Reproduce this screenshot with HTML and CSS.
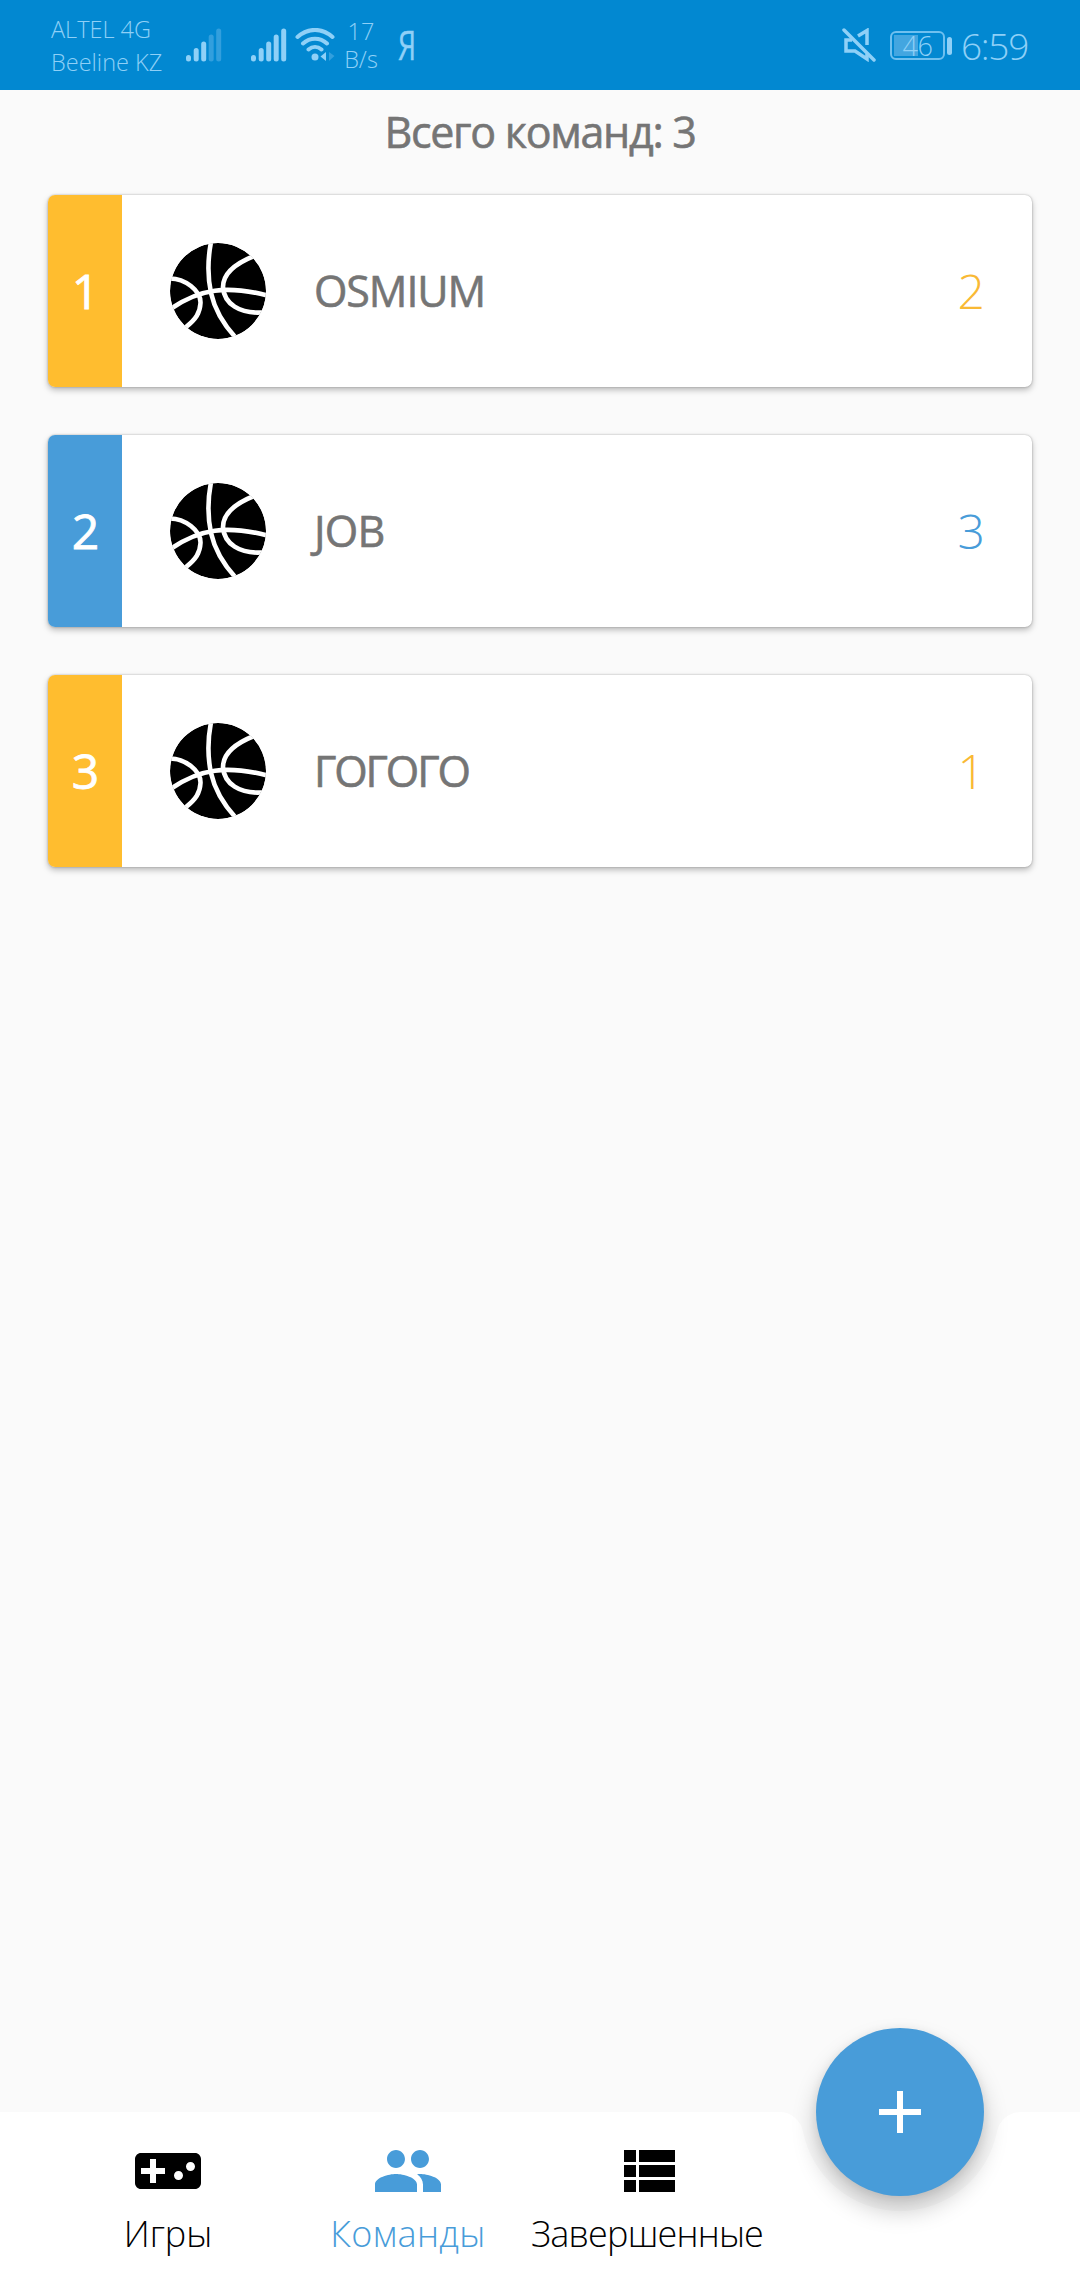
FILE: index.html
```html
<!DOCTYPE html>
<html lang="ru">
<head>
<meta charset="utf-8">
<title>Команды</title>
<link rel="stylesheet" href="styles.css">
</head>
<body>
<svg class="defs" width="0" height="0" aria-hidden="true">
  <symbol id="ball" viewBox="0 0 96 96">
    <clipPath id="ball-clip"><circle cx="48" cy="48" r="48"/></clipPath>
    <g clip-path="url(#ball-clip)">
      <circle cx="48" cy="48" r="48"/>
      <g fill="none" stroke="#fff" stroke-width="4.600">
        <path d="M41 -1C37 20 38 36 41 50C45 68 54 82 66 95"/>
        <path d="M2 65C30 46 56 42 98 52.500"/>
        <path d="M-1 35.500C15 35 31 48 30.500 60C30 70 26 76 16 84"/>
        <path d="M84 13C64 21 53 32 53 44C54 61 70 71 92 69.500"/>
      </g>
    </g>
  </symbol>
</svg>
<div class="screen">
  <header class="status">
    <div class="carriers"><span class="altel">ALTEL 4G</span><span class="beeline">Beeline KZ</span></div>
    <svg class="signal first" viewBox="0 0 36 34" width="36" height="34" stroke="#8fd0f7" stroke-width="5" stroke-linecap="round">
      <path d="M2.500 29.500V31M10.200 22.500V31M17.700 16V31"/><path d="M25.200 9V31M32.700 3V31" stroke="#329fdd"/>
    </svg>
    <svg class="signal second" viewBox="0 0 36 34" width="36" height="34" stroke="#8fd0f7" stroke-width="5" stroke-linecap="round">
      <path d="M2.500 29.500V31M10.200 22.500V31M17.700 16V31M25.200 9V31M32.700 3V31"/>
    </svg>
    <svg class="wifi" viewBox="0 0 40 34" width="40" height="34" fill="none" stroke="#8fd0f7" stroke-width="4" stroke-linecap="round">
      <path d="M2.500 9C13 -.5 27 -.5 37.500 9M8 15.500C15 9 25 9 32 15.500M13.500 21.500C17.500 18 22.500 18 26.500 21.500"/>
      <circle cx="20" cy="29" r="3.500" fill="#8fd0f7" stroke="none"/>
      <path d="M31 24V33L25.500 28.500Z" fill="#8fd0f7" stroke="none"/><path d="M34 24V33L39.500 28Z" fill="#329fdd" stroke="none"/>
    </svg>
    <div class="speed"><span>17</span><span>B/s</span></div>
    <span class="ya">Я</span>
    <svg class="mute" viewBox="0 0 34 34" width="34" height="34" fill="none" stroke="#8fd0f7" stroke-width="3.500">
      <path d="M2 2L32 32" stroke-linecap="round"/><path d="M16 8L25 2.500V17M25 26V31L13 23H4V12H10"/>
    </svg>
    <div class="battery"><span>46</span></div><i class="battery-tip"></i>
    <span class="clock">6:59</span>
  </header>

  <main>
    <h1 class="total">Всего команд: 3</h1>
    <ul class="teams">
      <li class="team amber"><span class="place">1</span><svg class="ball"><use href="#ball"/></svg><span class="name osmium">OSMIUM</span><span class="points">2</span></li>
      <li class="team blue"><span class="place">2</span><svg class="ball"><use href="#ball"/></svg><span class="name job">JOB</span><span class="points">3</span></li>
      <li class="team amber"><span class="place">3</span><svg class="ball"><use href="#ball"/></svg><span class="name gogogo">ГОГОГО</span><span class="points">1</span></li>
    </ul>
  </main>

  <nav class="bar">
    <svg class="bar-shape" viewBox="0 0 1080 168" width="1080" height="168"><path fill="#fff" d="M0 0H779.400A24 24 0 0 1 802.900 19.300A99 99 0 0 0 997.100 19.300A24 24 0 0 1 1020.600 0H1080V168H0Z"/></svg>
    <a class="tab">
      <svg viewBox="0 0 24 24"><path d="M21 6H3c-1.100 0-2 .9-2 2v8c0 1.100.9 2 2 2h18c1.100 0 2-.9 2-2V8c0-1.100-.9-2-2-2zm-10 7H8v3H6v-3H3v-2h3V8h2v3h3v2zm4.500 2c-.83 0-1.500-.67-1.500-1.500s.67-1.500 1.500-1.500 1.500.67 1.500 1.500-.67 1.500-1.500 1.500zm4-3c-.83 0-1.500-.67-1.500-1.500S18.670 9 19.500 9s1.500.67 1.500 1.500-.67 1.500-1.500 1.500z"/></svg>
      <span class="games">Игры</span>
    </a>
    <a class="tab active">
      <svg viewBox="0 0 24 24"><path d="M16 11c1.660 0 2.990-1.340 2.990-3S17.660 5 16 5s-3 1.340-3 3 1.340 3 3 3zm-8 0c1.660 0 2.990-1.340 2.990-3S9.660 5 8 5 5 6.340 5 8s1.340 3 3 3zm0 2c-2.330 0-7 1.170-7 3.500V19h14v-2.500c0-2.330-4.670-3.500-7-3.500zm8 0c-.29 0-.62.020-.97.050 1.160.84 1.970 1.970 1.970 3.450V19h6v-2.500c0-2.330-4.670-3.500-7-3.500z"/></svg>
      <span class="squads">Команды</span>
    </a>
    <a class="tab">
      <svg viewBox="0 0 24 24"><path d="M4 14h4v-4H4v4zm0 5h4v-4H4v4zM4 9h4V5H4v4zm5 5h12v-4H9v4zm0 5h12v-4H9v4zM9 5v4h12V5H9z"/></svg>
      <span class="finished">Завершенные</span>
    </a>
    <button class="fab" aria-label="Добавить"><svg viewBox="0 0 24 24" width="72" height="72"><path fill="#fff" d="M19 13h-6v6h-2v-6H5v-2h6V5h2v6h6v2z"/></svg></button>
  </nav>
</div>
</body>
</html>
```
FILE: styles.css
```css
* { box-sizing: border-box; }
body { margin: 0; font-family: "Open Sans", "Noto Sans", sans-serif; }
.defs { display: block; }
.screen { width: 1080px; height: 2280px; display: flex; flex-direction: column; background: #fafafa; overflow: hidden; }

.status { height: 90px; flex: none; background: #0288d1; color: #8fd0f7; display: flex; align-items: flex-start; padding-left: 51px; font-weight: 300; }
.carriers { width: 135px; padding-top: 13px; display: flex; flex-direction: column; font-size: 23.500px; line-height: 33px; white-space: nowrap; }
.signal { margin-top: 28px; flex: none; }
.signal.second { margin-left: 29px; }
.wifi { margin: 28px 0 0 8px; flex: none; }
.speed { width: 42px; margin: 17px 0 0 5px; display: flex; flex-direction: column; align-items: center; font-size: 23.500px; line-height: 28px; }
.ya { width: 18px; margin: 19px 0 0 16px; font-size: 41px; line-height: 50px; font-weight: 400; transform: scaleX(.7); transform-origin: left; -webkit-text-stroke: .4px currentColor; }
.mute { margin: 28px 0 0 426px; flex: none; }
.battery { width: 55px; height: 29px; margin: 31px 0 0 14px; flex: none; border: 2px solid #6fc0ef; border-radius: 6px; background: linear-gradient(#43a6e0, #43a6e0) 2px 2px / 24px 21px no-repeat; text-align: center; font-size: 27px; line-height: 25px; letter-spacing: -.5px; }
.battery-tip { width: 5px; height: 18px; margin: 37px 0 0 2px; flex: none; border-radius: 3px; background: #8fd0f7; }
.clock { margin: 19px 0 0 9px; font-size: 37px; line-height: 53px; letter-spacing: -1.300px; }

.total { margin: 12px 0 0; height: 61px; text-align: center; font-size: 43px; line-height: 60px; font-weight: 400; letter-spacing: -1.300px; color: #757575; -webkit-text-stroke: .6px currentColor; }
.teams { list-style: none; margin: 0; padding: 32px 48px 0; display: flex; flex-direction: column; gap: 48px; }
.team { height: 192px; display: flex; align-items: center; background: #fff; border-radius: 7px; overflow: hidden; box-shadow: 0 0 2px rgba(0,0,0,.3), 0 3px 6px rgba(0,0,0,.26); padding-right: 47px; }
.place { align-self: stretch; width: 74px; padding-left: 1px; color: #fff; font-size: 48px; line-height: 191px; text-align: center; -webkit-text-stroke: .8px currentColor; }
.amber .place { background: #ffbd2f; }
.blue .place { background: #489cd9; }
.ball { width: 96px; height: 96px; margin: 0 48px; }
.name { flex: 1; color: #757575; font-size: 43px; line-height: 60px; -webkit-text-stroke: .6px currentColor; }
.osmium { letter-spacing: -1.100px; }
.job { letter-spacing: -.800px; }
.gogogo { letter-spacing: -2.100px; }
.points { font-size: 48px; font-weight: 300; line-height: 66px; color: #f9b934; }
.blue .points { color: #489cd9; }

.bar { position: relative; height: 168px; margin-top: auto; flex: none; display: flex; padding: 23px 0 0 48px; }
.bar-shape { position: absolute; left: 0; top: 0; }
.tab { position: relative; width: 240px; display: flex; flex-direction: column; align-items: center; color: #000; }
.tab svg { width: 72px; height: 72px; fill: currentColor; }
.tab span { font-size: 36px; line-height: 53px; font-weight: 300; white-space: nowrap; }
.squads { letter-spacing: .400px; }
.finished { letter-spacing: -.800px; padding-right: 2px; }
.tab.active { color: #489cd9; }
.fab { position: absolute; left: 816px; top: -84px; width: 168px; height: 168px; padding: 0; border: 0; border-radius: 50%; background: #489cd9; display: flex; align-items: center; justify-content: center; box-shadow: 0 14px 24px rgba(0,0,0,.22), 0 2px 10px rgba(0,0,0,.08); }
```
